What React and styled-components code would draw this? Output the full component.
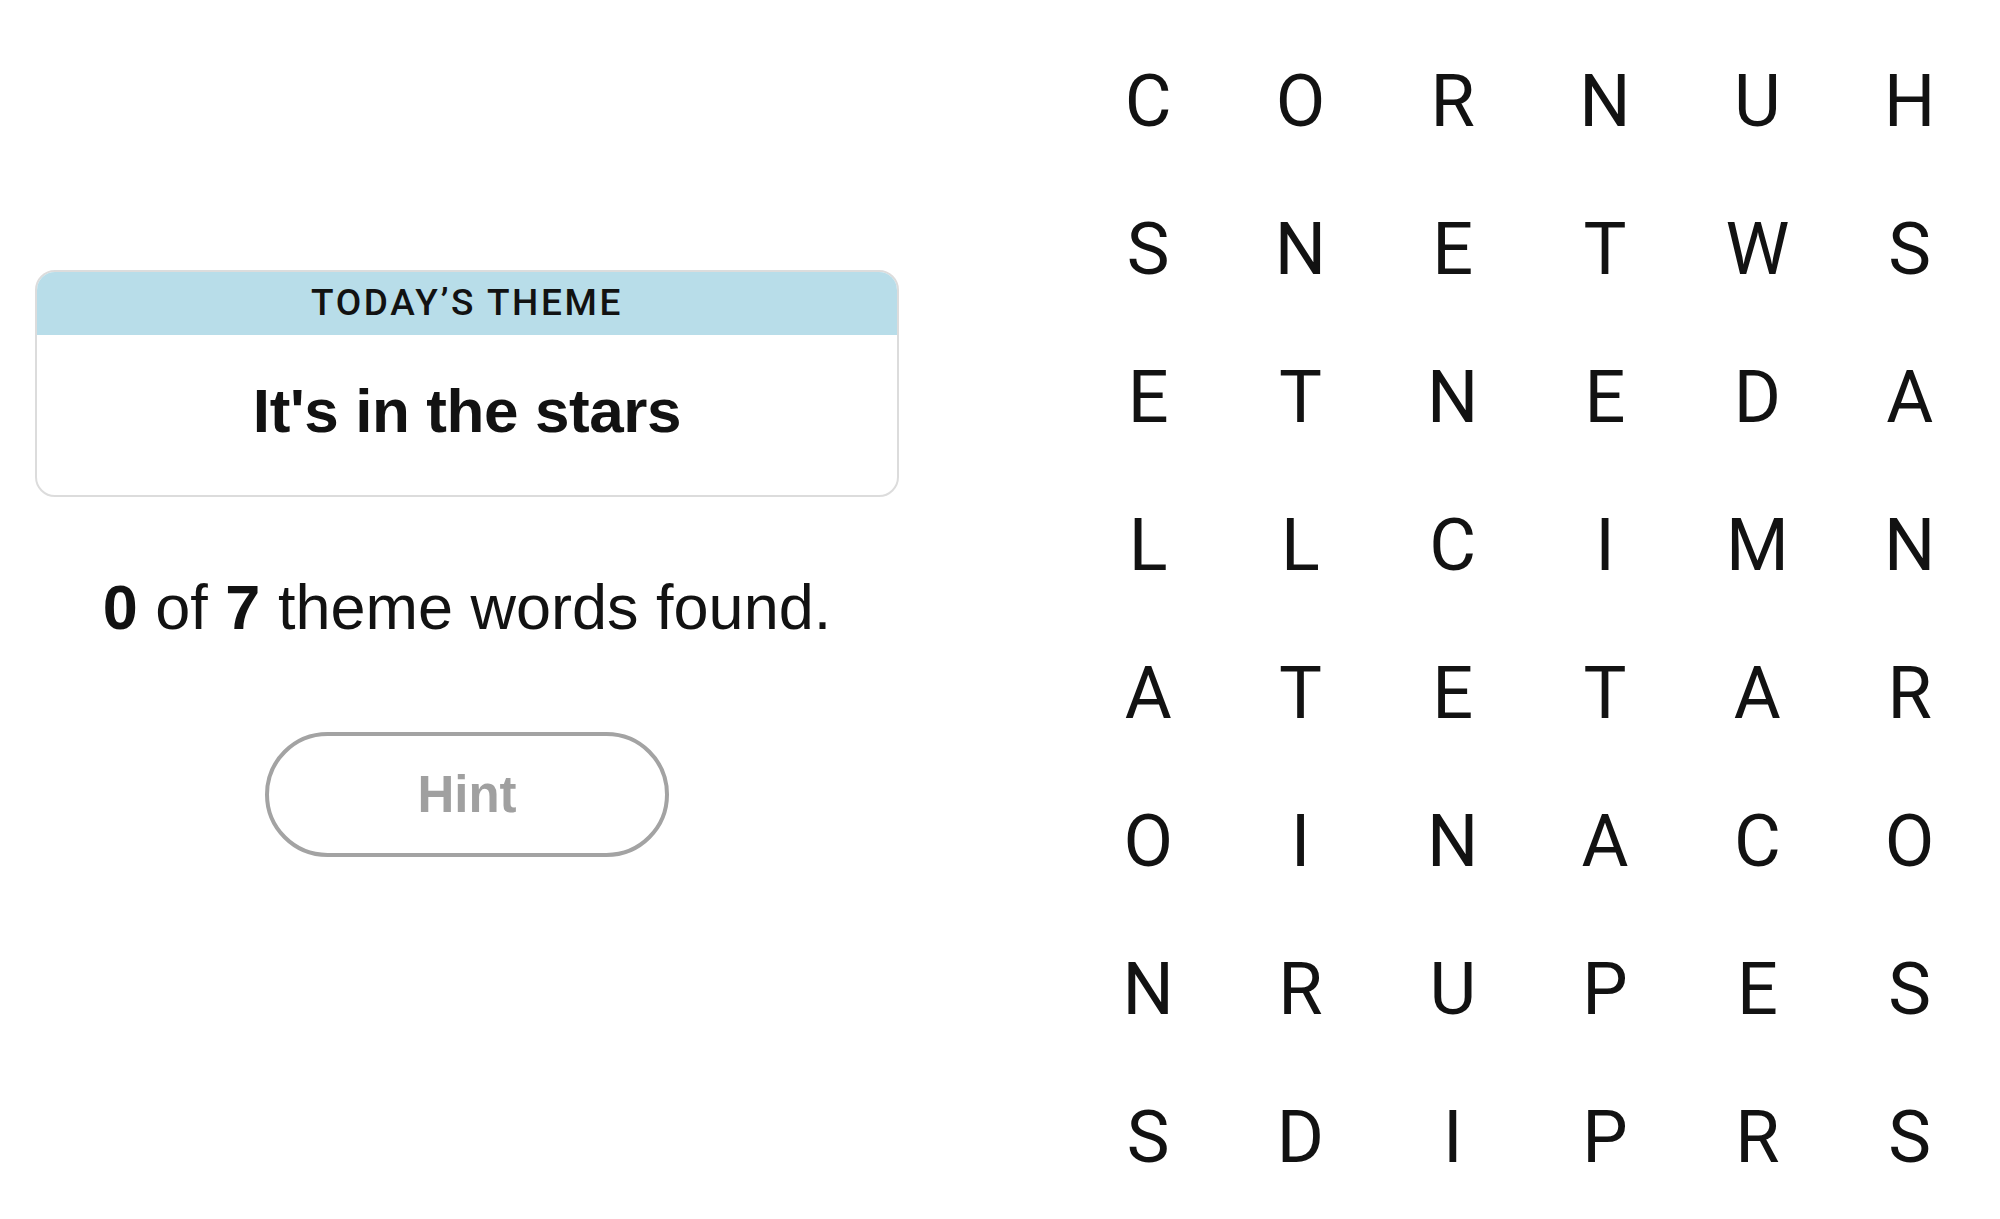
import React from 'react'
import styled, { createGlobalStyle } from 'styled-components'

const GlobalStyle = createGlobalStyle`
  html, body {
    margin: 0;
    padding: 0;
    background: #ffffff;
  }
  body {
    font-family: "Liberation Sans", Arial, sans-serif;
    color: #121212;
  }
`

const Page = styled.div`
  display: flex;
  align-items: flex-start;
  gap: 173px;
  width: 2000px;
  height: 1219px;
  padding-left: 35px;
  box-sizing: border-box;
`

const Sidebar = styled.div`
  width: 864px;
  padding-top: 270px;
  display: flex;
  flex-direction: column;
  align-items: center;
`

const ThemeCard = styled.div`
  width: 100%;
  box-sizing: border-box;
  border: 2px solid #dcdcdc;
  border-radius: 20px;
  overflow: hidden;
  background: #fff;
`

const ThemeHeader = styled.div`
  height: 65px;
  margin: -2px -2px 0;
  background: #b8dde9;
  display: flex;
  align-items: center;
  justify-content: center;
  font-family: Roboto, "Liberation Sans", sans-serif;
  font-size: 37px;
  font-weight: 500;
  letter-spacing: 2.6px;
  text-transform: uppercase;
`

const ThemeBody = styled.div`
  height: 160px;
  box-sizing: border-box;
  padding-bottom: 10px;
  display: flex;
  align-items: center;
  justify-content: center;
  font-size: 62px;
  font-weight: 700;
  letter-spacing: -0.4px;
`

const Counter = styled.p`
  margin: 74px 0 0;
  font-size: 63px;
  line-height: 1.15;
  text-align: center;

  b {
    font-weight: 700;
  }
`

const HintButton = styled.button`
  margin-top: 89px;
  width: 404px;
  height: 125px;
  border: 4px solid #a3a3a3;
  border-radius: 63px;
  background: #fff;
  color: #a0a0a0;
  font-family: "Liberation Sans", Arial, sans-serif;
  font-size: 51px;
  font-weight: 700;
  cursor: default;
`

const Board = styled.div`
  display: grid;
  grid-template-columns: repeat(6, 152.3px);
  grid-auto-rows: 148px;
  padding-top: 28px;
`

const Cell = styled.div`
  display: flex;
  align-items: center;
  justify-content: center;
  font-family: Roboto, "Liberation Sans", sans-serif;
  font-size: 72px;
  line-height: 148px;
  font-weight: 400;
  color: #121212;
  user-select: none;
`

const rows = [
  'CORNUH',
  'SNETWS',
  'ETNEDA',
  'LLCIMN',
  'ATETAR',
  'OINACO',
  'NRUPES',
  'SDIPRS',
]

export default function App() {
  return (
    <>
      <GlobalStyle />
      <Page>
        <Sidebar>
          <ThemeCard>
            <ThemeHeader>Today’s Theme</ThemeHeader>
            <ThemeBody>It's in the stars</ThemeBody>
          </ThemeCard>
          <Counter>
            <b>0</b> of <b>7</b> theme words found.
          </Counter>
          <HintButton>Hint</HintButton>
        </Sidebar>
        <Board>
          {rows.map((row, r) =>
            row.split('').map((letter, c) => <Cell key={`${r}-${c}`}>{letter}</Cell>)
          )}
        </Board>
      </Page>
    </>
  )
}
